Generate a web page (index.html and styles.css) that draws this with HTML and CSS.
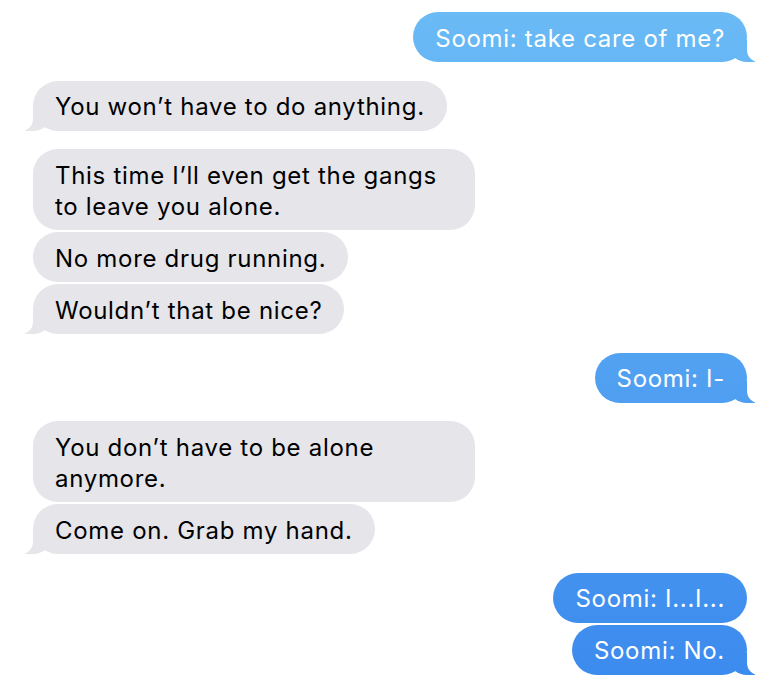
FILE: index.html
```html
<!DOCTYPE html>
<html lang="en">
<head>
<meta charset="utf-8">
<title>Messages</title>
<link rel="stylesheet" href="styles.css">
</head>
<body>
<div class="chat">
  <div class="group sent">
    <div class="bubble tail">Soomi: take care of me?</div>
  </div>
  <div class="group received">
    <div class="bubble tail">You won’t have to do anything.</div>
  </div>
  <div class="group received">
    <div class="bubble">This time I’ll even get the gangs to leave you alone.</div>
    <div class="bubble">No more drug running.</div>
    <div class="bubble tail">Wouldn’t that be nice?</div>
  </div>
  <div class="group sent">
    <div class="bubble tail">Soomi: I-</div>
  </div>
  <div class="group received">
    <div class="bubble">You don’t have to be alone anymore.</div>
    <div class="bubble tail">Come on. Grab my hand.</div>
  </div>
  <div class="group sent">
    <div class="bubble">Soomi: I...I...</div>
    <div class="bubble tail">Soomi: No.</div>
  </div>
</div>
</body>
</html>
```

FILE: styles.css
```css
html, body {
  margin: 0;
  padding: 0;
  background: #ffffff;
}

body {
  font-family: Inter, "Noto Sans", "Liberation Sans", sans-serif;
  font-size: 24px;
  letter-spacing: 0.7px;
  -webkit-font-smoothing: antialiased;
}

.chat {
  display: flex;
  flex-direction: column;
  padding: 12px 27px 0 33px;
}

.group {
  display: flex;
  flex-direction: column;
  gap: 2px;
  margin-top: 18.5px;
}

.group:first-child {
  margin-top: 0;
}

.group.sent {
  align-items: flex-end;
}

.group.received {
  align-items: flex-start;
}

.bubble {
  position: relative;
  box-sizing: border-box;
  max-width: 442px;
  padding: 10.5px 22px 8.5px;
  line-height: 31px;
  border-radius: 25px;
}

.received .bubble {
  background: #e5e5ea;
  color: #000000;
}

.sent .bubble {
  color: #ffffff;
  background: linear-gradient(180deg, #6bbbf6 0px, #3b8aee 686px);
  background-attachment: fixed;
}

.bubble.tail::before,
.bubble.tail::after {
  content: "";
  position: absolute;
  bottom: 0;
  height: 22px;
}

.received .bubble.tail::before {
  left: -8px;
  width: 26px;
  background: #e5e5ea;
  border-bottom-right-radius: 18px 16px;
}

.received .bubble.tail::after {
  left: -20px;
  width: 20px;
  background: #ffffff;
  border-bottom-right-radius: 12px;
}

.sent .bubble.tail::before {
  right: -8px;
  width: 26px;
  background: linear-gradient(180deg, #6bbbf6 0px, #3b8aee 686px);
  background-attachment: fixed;
  border-bottom-left-radius: 18px 16px;
}

.sent .bubble.tail::after {
  right: -20px;
  width: 20px;
  background: #ffffff;
  border-bottom-left-radius: 12px;
}
```
